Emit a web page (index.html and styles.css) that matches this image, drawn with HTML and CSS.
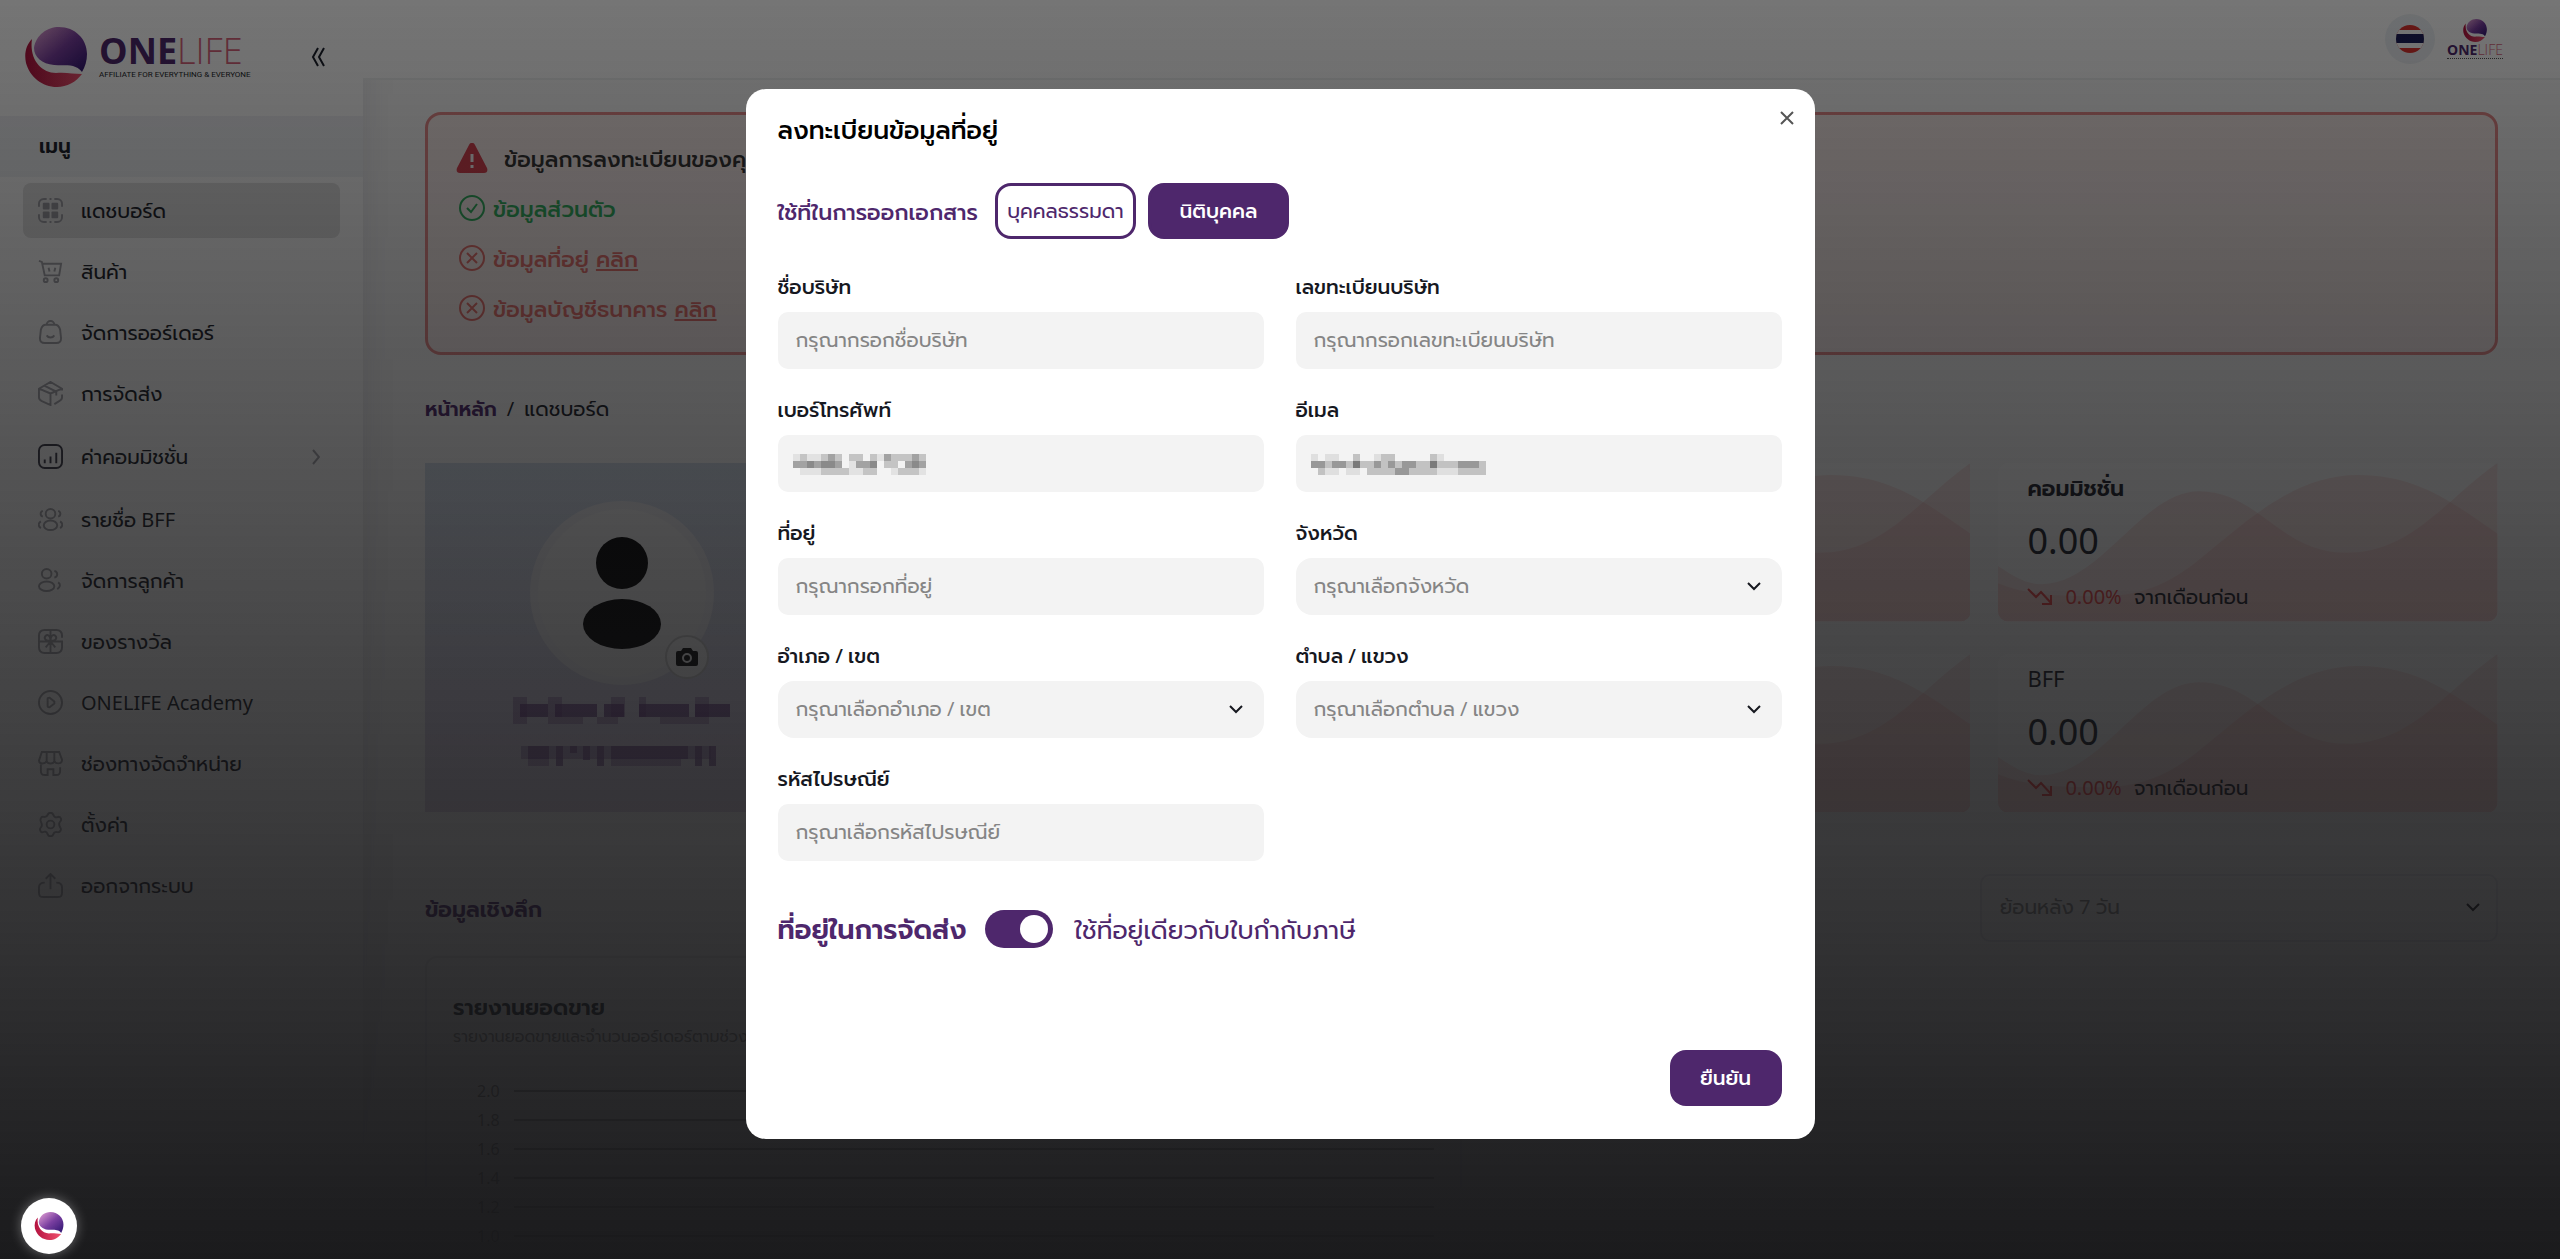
FILE: index.html
```html
<!DOCTYPE html>
<html lang="th">
<head>
    <meta charset="UTF-8">
    <meta name="viewport" content="width=device-width, initial-scale=1.0">
    <title>ONELIFE</title>
    <link rel="stylesheet" href="styles.css">
</head>
<body>
<svg class="defs" aria-hidden="true">
    <defs>
        <linearGradient id="purple" x1="0" y1="0" x2="1" y2="1">
            <stop offset="0" stop-color="#e9a6d8"/>
            <stop offset="0.5" stop-color="#7a3fa0"/>
            <stop offset="1" stop-color="#2c1470"/>
        </linearGradient>
        <linearGradient id="red" x1="0" y1="0" x2="1" y2="0">
            <stop offset="0" stop-color="#b3123f"/>
            <stop offset="1" stop-color="#f0506e"/>
        </linearGradient>
        <symbol id="logo" viewBox="0 0 62 60">
            <path fill="url(#purple)" d="M9 21C11 8 22 0 34 0c16 0 28 12 28 27 0 7-2 13-5 18-7-9-17-6-28-7C17 37 9 30 9 21z"/>
            <path fill="url(#red)" d="M7 12C1 18-1 27 1 36c4 14 16 24 31 24 10 0 19-5 25-13-9 0-16-2-26-1C16 46 4 32 7 12z"/>
        </symbol>
        <symbol id="wave" viewBox="0 0 497 157" preserveAspectRatio="none">
            <path fill="#f09a96" fill-opacity=".24" d="M0 102c15 10 28 18 43 18 60 0 100-92 157-92 60 0 80 61 147 61 65 0 100-55 150-89v147a10 10 0 0 1-10 10H10a10 10 0 0 1-10-10z"/>
            <path fill="#f09a96" fill-opacity=".24" d="M100 132c30 0 60-5 96-33C240 65 290 12 358 12c60 0 95 28 139 58v77a10 10 0 0 1-10 10H10a10 10 0 0 1-10-10v-28c30 12 60 13 100 13z"/>
        </symbol>
        <symbol id="down" viewBox="0 0 26 20">
            <path fill="none" stroke="#ee4444" stroke-width="2" d="M1 2l8 8 5-5 10 11M24 8v9h-9"/>
        </symbol>
        <symbol id="chevron" viewBox="0 0 14 9">
            <path fill="none" stroke="currentColor" stroke-width="2" d="M1 1l6 6 6-6"/>
        </symbol>
        <symbol id="cross" viewBox="0 0 28 28">
            <g fill="none" stroke="currentColor" stroke-width="2"><circle cx="14" cy="14" r="12"/><path d="M9 9l10 10M19 9L9 19"/></g>
        </symbol>
    </defs>
</svg>

<div class="layout">
    <aside class="sidebar">
        <div class="brand">
            <svg class="brand-logo"><use href="#logo"/></svg>
            <div class="brand-text">
                <div class="brand-name"><b>ONE</b><span>LIFE</span></div>
                <div class="brand-tag">AFFILIATE FOR EVERYTHING &amp; EVERYONE</div>
            </div>
            <button class="collapse" aria-label="ย่อเมนู">
                <svg width="14" height="20" viewBox="0 0 14 20" fill="none" stroke="#1a1f2b" stroke-width="2"><path d="M7 1L2 10l5 9M13 1L8 10l5 9"/></svg>
            </button>
        </div>
        <div class="menu-title">เมนู</div>
        <nav class="menu">
            <a href="#" class="menu-item active">
                <svg class="icon" viewBox="0 0 26 26"><path d="M1 9V6a5 5 0 0 1 5-5h3M17 1h3a5 5 0 0 1 5 5v3M25 17v3a5 5 0 0 1-5 5h-3M9 25H6a5 5 0 0 1-5-5v-3M12 1h2M12 25h2"/><g fill="#888890" stroke="none"><rect x="5" y="5" width="7" height="7" rx="1"/><rect x="14" y="5" width="7" height="7" rx="1"/><rect x="5" y="14" width="7" height="7" rx="1"/><rect x="14" y="14" width="7" height="7" rx="1"/></g></svg>
                แดชบอร์ด
            </a>
            <a href="#" class="menu-item">
                <svg class="icon" viewBox="0 0 26 26"><path d="M1 2l3 1 3 14h15l2-12H5M11 9l1 4M18 9l-1 4"/><circle cx="8" cy="22" r="2"/><circle cx="19" cy="22" r="2"/></svg>
                สินค้า
            </a>
            <a href="#" class="menu-item">
                <svg class="icon" viewBox="0 0 26 26"><path d="M8 5h10c3 0 4 2 5 5l1 9c0 4-2 5-5 5H7c-3 0-5-1-5-5l1-9c1-3 2-5 5-5zM9 5a4 4 0 0 1 8 0M9 16c2 3 6 3 8 0"/></svg>
                จัดการออร์เดอร์
            </a>
            <a href="#" class="menu-item">
                <svg class="icon" viewBox="0 0 26 26"><path d="M25 8L13 13v12l-9-4c-2-1-3-2-3-4V8l12-7 12 7v2M1 8l12 5M7 5l12 6v4M25 14v3c0 2-1 3-3 4l-5 3"/></svg>
                การจัดส่ง
            </a>
            <a href="#" class="menu-item tall dark">
                <svg class="icon" viewBox="0 0 26 26"><rect x="1" y="1" width="24" height="24" rx="6"/><path d="M7 20v-4M13 20v-7M19 20V9"/></svg>
                ค่าคอมมิชชั่น
                <svg class="menu-arrow" viewBox="0 0 8 16"><path d="M1 1l6 7-6 7"/></svg>
            </a>
            <a href="#" class="menu-item">
                <svg class="icon" viewBox="0 0 26 26"><circle cx="13" cy="7" r="5"/><ellipse cx="13" cy="19" rx="7" ry="5"/><path d="M5 4c-3 1-3 5 0 6M21 4c3 1 3 5 0 6M3 15c-3 2-3 5 0 7M23 15c3 2 3 5 0 7"/></svg>
                รายชื่อ BFF
            </a>
            <a href="#" class="menu-item">
                <svg class="icon" viewBox="0 0 26 26"><circle cx="9" cy="6" r="5"/><ellipse cx="9" cy="19" rx="8" ry="5"/><path d="M17 3c4 1 4 6 0 7M21 15c3 2 2 5-1 7"/></svg>
                จัดการลูกค้า
            </a>
            <a href="#" class="menu-item">
                <svg class="icon" viewBox="0 0 26 26"><path d="M25 9V7c0-4-2-6-6-6H7C3 1 1 3 1 7v12c0 4 2 6 6 6h12c4 0 6-2 6-6v-6H1M13 1v24M13 12c-6 1-7-3-5-5s5 0 5 5c0-5 3-7 5-5s1 6-5 5zM13 13l-5 6M13 13l5 6"/></svg>
                ของรางวัล
            </a>
            <a href="#" class="menu-item">
                <svg class="icon" viewBox="0 0 26 26"><circle cx="13" cy="13" r="12"/><path d="M10 9v8c0 1 1 1 2 1l5-4v-2l-5-4c-1 0-2 0-2 1z"/></svg>
                ONELIFE Academy
            </a>
            <a href="#" class="menu-item">
                <svg class="icon" viewBox="0 0 26 26"><path d="M3 14v7c0 3 1 4 4 4h3v-6h6v6h3c3 0 4-1 4-4v-4M1 10L4 1h18l3 8c0 5-7 5-8 1 0 4-8 4-8 0-1 4-8 4-8 0zM9 1v9M17 1v9"/></svg>
                ช่องทางจัดจำหน่าย
            </a>
            <a href="#" class="menu-item">
                <svg class="icon" viewBox="0 0 26 26"><path d="M10 3c1-3 5-3 6 0s3 3 5 2c3 0 4 3 2 5s-1 4 0 6c2 2 0 5-2 5s-4-1-5 2-5 3-6 0-3-3-5-2-4-3-2-5 1-4 0-6 0-5 2-5 4 1 5-2z"/><circle cx="13" cy="13" r="4"/></svg>
                ตั้งค่า
            </a>
            <a href="#" class="menu-item">
                <svg class="icon" viewBox="0 0 26 26"><path d="M7 10c-4 0-6 1-6 5v5c0 4 1 5 5 5h14c4 0 5-1 5-5v-5c0-4-2-5-6-5M13 17V1M8 6l5-5 5 5"/></svg>
                ออกจากระบบ
            </a>
        </nav>
    </aside>

    <div class="page">
        <header class="topbar">
            <button class="lang" aria-label="ภาษาไทย">
                <svg width="28" height="28" viewBox="0 0 28 28"><clipPath id="round"><circle cx="14" cy="14" r="14"/></clipPath><g clip-path="url(#round)"><path fill="#e0332f" d="M0 0h28v28H0z"/><path fill="#fff" d="M0 5h28v18H0z"/><path fill="#1d1f5a" d="M0 9h28v9H0z"/></g></svg>
            </button>
            <div class="account">
                <svg class="account-logo"><use href="#logo"/></svg>
                <div class="brand-name small"><b>ONE</b><span>LIFE</span></div>
                <div class="account-line"></div>
            </div>
        </header>

        <main class="content">
            <section class="alert">
                <div class="alert-title">
                    <svg width="32" height="30" viewBox="0 0 32 30"><path fill="#d9404f" d="M13 2c1-3 5-3 6 0l12 23c1 3 0 5-3 5H4c-3 0-4-2-3-5z"/><path stroke="#fff" stroke-width="3" d="M16 11v8M16 22v3"/></svg>
                    ข้อมูลการลงทะเบียนของคุณ
                </div>
                <div class="alert-row ok">
                    <svg width="28" height="28" viewBox="0 0 28 28" fill="none" stroke="currentColor" stroke-width="2"><circle cx="14" cy="14" r="12"/><path d="M9 14l4 4 6-8"/></svg>
                    ข้อมูลส่วนตัว
                </div>
                <div class="alert-row"><svg width="28" height="28"><use href="#cross"/></svg>ข้อมูลที่อยู่ <a href="#">คลิก</a></div>
                <div class="alert-row"><svg width="28" height="28"><use href="#cross"/></svg>ข้อมูลบัญชีธนาคาร <a href="#">คลิก</a></div>
            </section>

            <div class="breadcrumb"><a href="#">หน้าหลัก</a><span>/</span><span>แดชบอร์ด</span></div>

            <section class="overview">
                <div class="profile">
                    <div class="avatar">
                        <svg width="78" height="116" viewBox="0 0 78 116"><circle cx="39" cy="28" r="26"/><ellipse cx="39" cy="89" rx="39" ry="25"/></svg>
                        <button class="camera" aria-label="เปลี่ยนรูป">
                            <svg width="22" height="18" viewBox="0 0 22 18"><path fill="#111" fill-rule="evenodd" d="M7 0h8l2 3h3a2 2 0 0 1 2 2v11a2 2 0 0 1-2 2H2a2 2 0 0 1-2-2V5a2 2 0 0 1 2-2h3zM11 5a5 5 0 1 0 0 10 5 5 0 0 0 0-10z"/><circle cx="11" cy="10" r="3" fill="#111"/></svg>
                        </button>
                    </div>
                    <svg class="mask-name" viewBox="0 0 217 27" shape-rendering="crispEdges">
                        <path fill="#8d6aa8" fill-opacity=".5" d="M0 0h14v27H0zM35 0h14v20H35zM98 0h14v20H98zM126 0h7v20h-7zM182 0h14v20h-14z"/>
                        <path fill="#6b3f86" fill-opacity=".7" d="M7 7h28v13H7zM42 7h42v13H42zM91 7h20v13H91zM126 7h50v13h-50zM182 7h35v13h-35z"/>
                        <path fill="#7d5a98" fill-opacity=".4" d="M35 20h35v7H35zM84 20h21v7H84zM147 20h49v7h-49z"/>
                    </svg>
                    <svg class="mask-name" viewBox="0 0 217 27" shape-rendering="crispEdges">
                        <path fill="#6b3f86" fill-opacity=".6" d="M15 6h21v13H15zM43 6h7v20h-7zM57 6h7v7h-7zM70 6h7v14h-7zM84 6h7v20h-7zM98 6h77v13H98zM182 6h7v20h-7zM196 6h7v20h-7z"/>
                        <path fill="#7d5a98" fill-opacity=".4" d="M8 6h190v13H8zM15 19h21v7H15zM98 19h70v7H98z"/>
                    </svg>
                </div>
                <div class="stats">
                    <div class="stat"><svg class="stat-wave"><use href="#wave"/></svg></div>
                    <div class="stat"><svg class="stat-wave"><use href="#wave"/></svg></div>
                    <div class="stat">
                        <svg class="stat-wave"><use href="#wave"/></svg>
                        <div class="stat-title bold">คอมมิชชั่น</div>
                        <div class="stat-value">0.00</div>
                        <div class="stat-change"><svg width="26" height="20"><use href="#down"/></svg><span class="pct">0.00%</span><span>จากเดือนก่อน</span></div>
                    </div>
                    <div class="stat"><svg class="stat-wave"><use href="#wave"/></svg></div>
                    <div class="stat"><svg class="stat-wave"><use href="#wave"/></svg></div>
                    <div class="stat">
                        <svg class="stat-wave"><use href="#wave"/></svg>
                        <div class="stat-title">BFF</div>
                        <div class="stat-value">0.00</div>
                        <div class="stat-change"><svg width="26" height="20"><use href="#down"/></svg><span class="pct">0.00%</span><span>จากเดือนก่อน</span></div>
                    </div>
                </div>
            </section>

            <div class="insight">
                <h2>ข้อมูลเชิงลึก</h2>
                <div class="range">
                    <select aria-label="ช่วงเวลา"><option>ย้อนหลัง 7 วัน</option></select>
                    <svg class="select-arrow"><use href="#chevron"/></svg>
                </div>
            </div>

            <section class="report">
                <h3>รายงานยอดขาย</h3>
                <p>รายงานยอดขายและจำนวนออร์เดอร์ตามช่วงเวลา</p>
                <div class="axis">
                    <div class="tick">2.0</div>
                    <div class="tick">1.8</div>
                    <div class="tick">1.6</div>
                    <div class="tick">1.4</div>
                    <div class="tick">1.2</div>
                    <div class="tick">1.0</div>
                </div>
            </section>
        </main>
    </div>
</div>

<div class="overlay">
    <div class="modal" role="dialog" aria-labelledby="modalTitle">
        <button class="close" aria-label="ปิด">
            <svg width="14" height="14" viewBox="0 0 14 14" stroke="#555" stroke-width="2"><path d="M1 1l12 12M13 1L1 13"/></svg>
        </button>
        <h1 id="modalTitle">ลงทะเบียนข้อมูลที่อยู่</h1>
        <form>
            <div class="type-row">
                <span class="type-label">ใช้ที่ในการออกเอกสาร</span>
                <button type="button" class="type-button">บุคคลธรรมดา</button>
                <button type="button" class="type-button selected">นิติบุคคล</button>
            </div>

            <div class="fields">
                <div class="field">
                    <label for="company">ชื่อบริษัท</label>
                    <input type="text" id="company" placeholder="กรุณากรอกชื่อบริษัท">
                </div>
                <div class="field">
                    <label for="taxId">เลขทะเบียนบริษัท</label>
                    <input type="text" id="taxId" placeholder="กรุณากรอกเลขทะเบียนบริษัท">
                </div>
                <div class="field">
                    <label for="phone">เบอร์โทรศัพท์</label>
                    <div class="control">
                        <input type="tel" id="phone">
                        <svg class="mask" width="133" height="21" viewBox="0 0 19 3" shape-rendering="crispEdges">
                            <path fill="#e2e2e2" d="M0 0h1v1H0zM2 0h2v1H2zM1 2h3v1H1zM8 1h1v1H8zM12 0h2v1h-2zM8 2h3v1H8zM14 2h1v1h-1zM18 2h1v1h-1z"/>
                            <path fill="#c4c4c4" d="M1 0h1v1H1zM4 0h3v1H4zM8 0h2v1H8zM11 0h1v1h-1zM13 0h2v2h-2zM15 0h4v1h-4zM4 2h3v1H4zM6 2h2v1H6zM10 2h2v1h-2zM15 2h3v1h-3z"/>
                            <path fill="#a2a2a2" d="M0 1h4v1H0zM5 0h1v1H5zM6 1h1v1H6zM9 1h3v1H9zM13 0h1v1h-1zM16 1h1v1h-1zM18 1h1v1h-1zM17 0h1v1h-1z"/>
                            <path fill="#8a8a8a" d="M2 1h1v1H2zM4 1h2v1H4zM11 1h1v1h-1zM17 1h1v1h-1z"/>
                        </svg>
                    </div>
                </div>
                <div class="field">
                    <label for="email">อีเมล</label>
                    <div class="control">
                        <input type="email" id="email">
                        <svg class="mask" width="175" height="21" viewBox="0 0 25 3" shape-rendering="crispEdges">
                            <path fill="#dfdfdf" d="M0 0h1v1H0zM2 0h2v1H2zM9 0h1v1H9zM1 2h3v1H1zM5 2h2v1H5zM18 0h1v1h-1zM15 2h6v1h-6z"/>
                            <path fill="#c2c2c2" d="M0 1h25v1H0zM6 0h1v1H6zM10 0h2v1h-2zM17 0h1v1h-1zM1 2h1v1H1zM8 2h8v1H8zM16 2h2v1h-2zM21 2h4v1h-4z"/>
                            <path fill="#989898" d="M0 1h2v1H0zM3 1h2v1H3zM9 1h1v1H9zM11 1h1v1h-1zM12 2h2v1h-2zM13 1h2v1h-2zM21 1h3v1h-3z"/>
                            <path fill="#7a7a7a" d="M6 1h1v1H6zM17 1h1v1h-1z"/>
                        </svg>
                    </div>
                </div>
                <div class="field">
                    <label for="address">ที่อยู่</label>
                    <input type="text" id="address" placeholder="กรุณากรอกที่อยู่">
                </div>
                <div class="field">
                    <label for="province">จังหวัด</label>
                    <div class="control">
                        <select id="province"><option>กรุณาเลือกจังหวัด</option></select>
                        <svg class="select-arrow"><use href="#chevron"/></svg>
                    </div>
                </div>
                <div class="field">
                    <label for="district">อำเภอ / เขต</label>
                    <div class="control">
                        <select id="district"><option>กรุณาเลือกอำเภอ / เขต</option></select>
                        <svg class="select-arrow"><use href="#chevron"/></svg>
                    </div>
                </div>
                <div class="field">
                    <label for="subdistrict">ตำบล / แขวง</label>
                    <div class="control">
                        <select id="subdistrict"><option>กรุณาเลือกตำบล / แขวง</option></select>
                        <svg class="select-arrow"><use href="#chevron"/></svg>
                    </div>
                </div>
                <div class="field">
                    <label for="zipcode">รหัสไปรษณีย์</label>
                    <input type="text" id="zipcode" placeholder="กรุณาเลือกรหัสไปรษณีย์">
                </div>
            </div>

            <div class="shipping">
                <span class="shipping-title">ที่อยู่ในการจัดส่ง</span>
                <input type="checkbox" class="switch" id="sameAddress" checked>
                <label for="sameAddress">ใช้ที่อยู่เดียวกับใบกำกับภาษี</label>
            </div>

            <div class="actions">
                <button type="submit" class="confirm">ยืนยัน</button>
            </div>
        </form>
    </div>
</div>

<button class="float-button" aria-label="ONELIFE">
    <svg width="30" height="28"><use href="#logo"/></svg>
</button>
</body>
</html>
```
FILE: styles.css
```css
:root {
    --primary: #4e276c;
    --field: #f3f3f3;
    --placeholder: #858585;
    --danger: #e6706c;
}

* {
    box-sizing: border-box;
}

body {
    margin: 0;
    height: 100vh;
    overflow: hidden;
    background: #fafafa;
    color: #1c1f2a;
    font-family: "Noto Sans", Prompt, sans-serif;
    font-size: 20px;
    line-height: 30px;
}

button, input, select {
    font: inherit;
    border: none;
}

button {
    cursor: pointer;
    padding: 0;
    background: none;
}

a {
    color: inherit;
    text-decoration: none;
}

h1, h2, h3, p {
    margin: 0;
}

.defs {
    position: absolute;
    width: 0;
    height: 0;
}

.layout {
    display: flex;
    height: 100%;
}

/* Sidebar */
.sidebar {
    width: 363px;
    flex-shrink: 0;
    background: #fff;
    box-shadow: 0 0 32px rgba(60, 60, 90, 0.12);
}

.brand {
    display: flex;
    align-items: center;
    height: 116px;
    padding: 0 38px 2px 25px;
}

.brand-logo {
    width: 62px;
    height: 60px;
    margin-right: 12px;
}

.brand-name {
    font-family: "Open Sans", sans-serif;
    font-size: 36px;
    line-height: 36px;
    white-space: nowrap;
    color: var(--primary);
}

.brand-name span {
    font-weight: 300;
    color: #d9637c;
}

.brand-tag {
    font-family: Roboto, sans-serif;
    font-size: 8px;
    line-height: 12px;
    white-space: nowrap;
}

.collapse {
    display: flex;
    margin-left: auto;
}

.menu-title {
    height: 61px;
    padding: 0 39px;
    background: #f3f4f8;
    font-weight: 600;
    line-height: 60px;
}

.menu {
    display: flex;
    flex-direction: column;
    gap: 6px;
    padding: 6px 23px;
}

.menu-item {
    display: flex;
    align-items: center;
    gap: 18px;
    height: 55px;
    padding: 0 20px 0 15px;
    border-radius: 8px;
}

.menu-item.active {
    background: #e2e2e2;
}

.menu-item.tall {
    height: 59px;
}

.icon, .menu-arrow {
    width: 25px;
    height: 25px;
    fill: none;
    stroke: #8e8e96;
    stroke-width: 2;
    opacity: 0.8;
}

.dark .icon {
    stroke: #3a3a48;
    opacity: 1;
}

.menu-arrow {
    width: 8px;
    height: 16px;
    margin-left: auto;
}

/* Page */
.page {
    flex: 1;
    min-width: 0;
}

.topbar {
    display: flex;
    align-items: center;
    justify-content: flex-end;
    gap: 12px;
    height: 80px;
    padding-right: 57px;
    background: #fff;
    border-bottom: 2px solid #eef0f2;
}

.lang {
    display: grid;
    place-items: center;
    width: 50px;
    height: 50px;
    border-radius: 50%;
    background: #eef2f5;
}

.account {
    display: flex;
    flex-direction: column;
    align-items: center;
    width: 56px;
}

.account-logo {
    width: 24px;
    height: 23px;
}

.brand-name.small {
    font-size: 14px;
    line-height: 16px;
}

.account-line {
    width: 100%;
    border-top: 1px dotted #555;
}

.content {
    padding: 32px 62px 0;
}

.alert {
    height: 243px;
    padding: 28px 28px 0;
    border: 3px solid #e88a8a;
    border-radius: 16px;
    background: #faeeec;
    font-size: 22px;
    font-weight: 500;
}

.alert-title, .alert-row {
    display: flex;
    align-items: center;
    gap: 7px;
    height: 30px;
    margin-bottom: 20px;
    color: var(--danger);
    white-space: nowrap;
}

.alert-title {
    gap: 16px;
    color: #333;
}

.alert-row svg {
    margin-left: 2px;
}

.alert-row.ok {
    color: #2fae5e;
}

.alert-row a {
    text-decoration: underline;
}

.breadcrumb {
    display: flex;
    gap: 10px;
    margin: 39px 0;
}

.breadcrumb a {
    color: var(--primary);
    font-weight: 600;
}

.overview {
    display: flex;
    justify-content: space-between;
    height: 349px;
}

.profile {
    display: flex;
    flex-direction: column;
    align-items: center;
    width: 19%;
    padding-top: 38px;
    background: linear-gradient(#d3deeb, #d9cfe2);
}

.avatar {
    position: relative;
    display: grid;
    place-items: center;
    width: 184px;
    height: 184px;
    margin-bottom: 12px;
    border: 8px solid #ececf0;
    border-radius: 50%;
    background: #f2f2f2;
}

.camera {
    position: absolute;
    right: -3px;
    bottom: -2px;
    display: grid;
    place-items: center;
    width: 44px;
    height: 44px;
    border: 2px solid #ccc;
    border-radius: 50%;
    background: #f5f5f5;
}

.mask-name {
    width: 217px;
    height: 27px;
    margin-bottom: 16px;
}

.stats {
    display: grid;
    grid-template-columns: repeat(3, 1fr);
    gap: 32px 28px;
    width: 75%;
}

.stat {
    position: relative;
    padding: 9px 29px 0;
    border-radius: 10px;
    background: #fff;
}

.stat > div {
    position: relative;
}

.stat-wave {
    position: absolute;
    inset: 0;
    width: 100%;
    height: 100%;
}

.stat-title {
    height: 48px;
    font-size: 22px;
}

.bold {
    font-weight: 600;
}

.stat-value {
    height: 62px;
    font-size: 36px;
    line-height: 42px;
}

.stat-change {
    display: flex;
    align-items: center;
    gap: 12px;
}

.pct {
    color: #ee4444;
}

.insight {
    display: flex;
    align-items: center;
    justify-content: space-between;
    height: 68px;
    margin-top: 62px;
}

.insight h2 {
    font-size: 22px;
    font-weight: 600;
    color: var(--primary);
}

.range {
    position: relative;
    width: 25%;
}

.range select {
    height: 68px;
    border: 2px solid #e8e8ee;
    background: #fff;
}

.range .select-arrow {
    right: 18px;
}

.report {
    width: 50%;
    margin-top: 14px;
    padding: 30px 26px;
    border: 2px solid #e8e8ee;
    border-radius: 12px;
    background: #fff;
}

.report h3 {
    font-size: 22px;
    font-weight: 600;
    line-height: 36px;
}

.report p {
    font-size: 16px;
    line-height: 24px;
    color: #8a8a8a;
}

.axis {
    padding: 28px 0 0 24px;
}

.tick {
    display: flex;
    align-items: center;
    gap: 14px;
    height: 29px;
    font-size: 16px;
    color: #777;
}

.tick::after {
    content: "";
    flex: 1;
    border-top: 2px solid #999;
}

/* Modal */
.overlay {
    position: fixed;
    inset: 0;
    display: flex;
    align-items: flex-start;
    justify-content: center;
    padding-top: 89px;
    background: linear-gradient(rgba(0, 0, 0, 0.54), rgba(24, 24, 26, 0.99));
}

.modal {
    position: relative;
    width: 1069px;
    max-width: 96%;
    padding: 22px 33px 33px 32px;
    border-radius: 20px;
    background: #fff;
    color: #16181f;
}

.close {
    position: absolute;
    top: 17px;
    right: 16px;
    display: grid;
    place-items: center;
    width: 24px;
    height: 24px;
}

.modal h1 {
    font-size: 25px;
    font-weight: 500;
    line-height: 36px;
    color: #000;
}

.type-row {
    display: flex;
    align-items: center;
    gap: 12px;
    margin: 36px 0 31px;
}

.type-label {
    margin-right: 5px;
    font-size: 22px;
    font-weight: 500;
    color: var(--primary);
}

.type-button {
    width: 141px;
    height: 56px;
    border: 3px solid var(--primary);
    border-radius: 16px;
    color: var(--primary);
    white-space: nowrap;
}

.type-button.selected {
    background: var(--primary);
    color: #fff;
    font-weight: 500;
}

.fields {
    display: grid;
    grid-template-columns: 1fr 1fr;
    gap: 24px 32px;
}

.field label {
    display: block;
    height: 42px;
    line-height: 34px;
    font-weight: 500;
}

.control {
    position: relative;
}

.field input, select {
    display: block;
    width: 100%;
    height: 57px;
    padding: 0 18px 2px;
    border-radius: 10px;
    background: var(--field);
    outline: none;
}

select {
    appearance: none;
    color: var(--placeholder);
}

.field select {
    border-radius: 16px;
}

input::placeholder {
    color: var(--placeholder);
    opacity: 1;
}

.select-arrow {
    position: absolute;
    top: 50%;
    right: 21px;
    width: 14px;
    height: 9px;
    margin-top: -5px;
    color: #16181f;
    pointer-events: none;
}

.mask {
    position: absolute;
    top: 19px;
    left: 15px;
}

.shipping {
    display: flex;
    align-items: center;
    gap: 18px;
    height: 40px;
    margin-top: 48px;
    font-size: 25px;
    color: var(--primary);
}

.shipping-title {
    font-size: 27px;
    font-weight: 600;
}

.shipping label {
    margin-left: 4px;
}

.switch {
    appearance: none;
    display: flex;
    justify-content: flex-end;
    width: 68px;
    height: 38px;
    margin: 0;
    padding: 5px;
    border-radius: 19px;
    background: var(--primary);
}

.switch::before {
    content: "";
    width: 28px;
    height: 28px;
    border-radius: 50%;
    background: #fff;
}

.switch:not(:checked) {
    justify-content: flex-start;
    background: #bbb;
}

.actions {
    display: flex;
    justify-content: flex-end;
    margin-top: 101px;
}

.confirm {
    width: 112px;
    height: 56px;
    border-radius: 16px;
    background: var(--primary);
    color: #fff;
    font-weight: 500;
}

.float-button {
    position: fixed;
    left: 21px;
    bottom: 5px;
    display: grid;
    place-items: center;
    width: 56px;
    height: 56px;
    border-radius: 50%;
    background: #fff;
    box-shadow: 0 0 12px rgba(255, 255, 255, 0.35);
}
```
